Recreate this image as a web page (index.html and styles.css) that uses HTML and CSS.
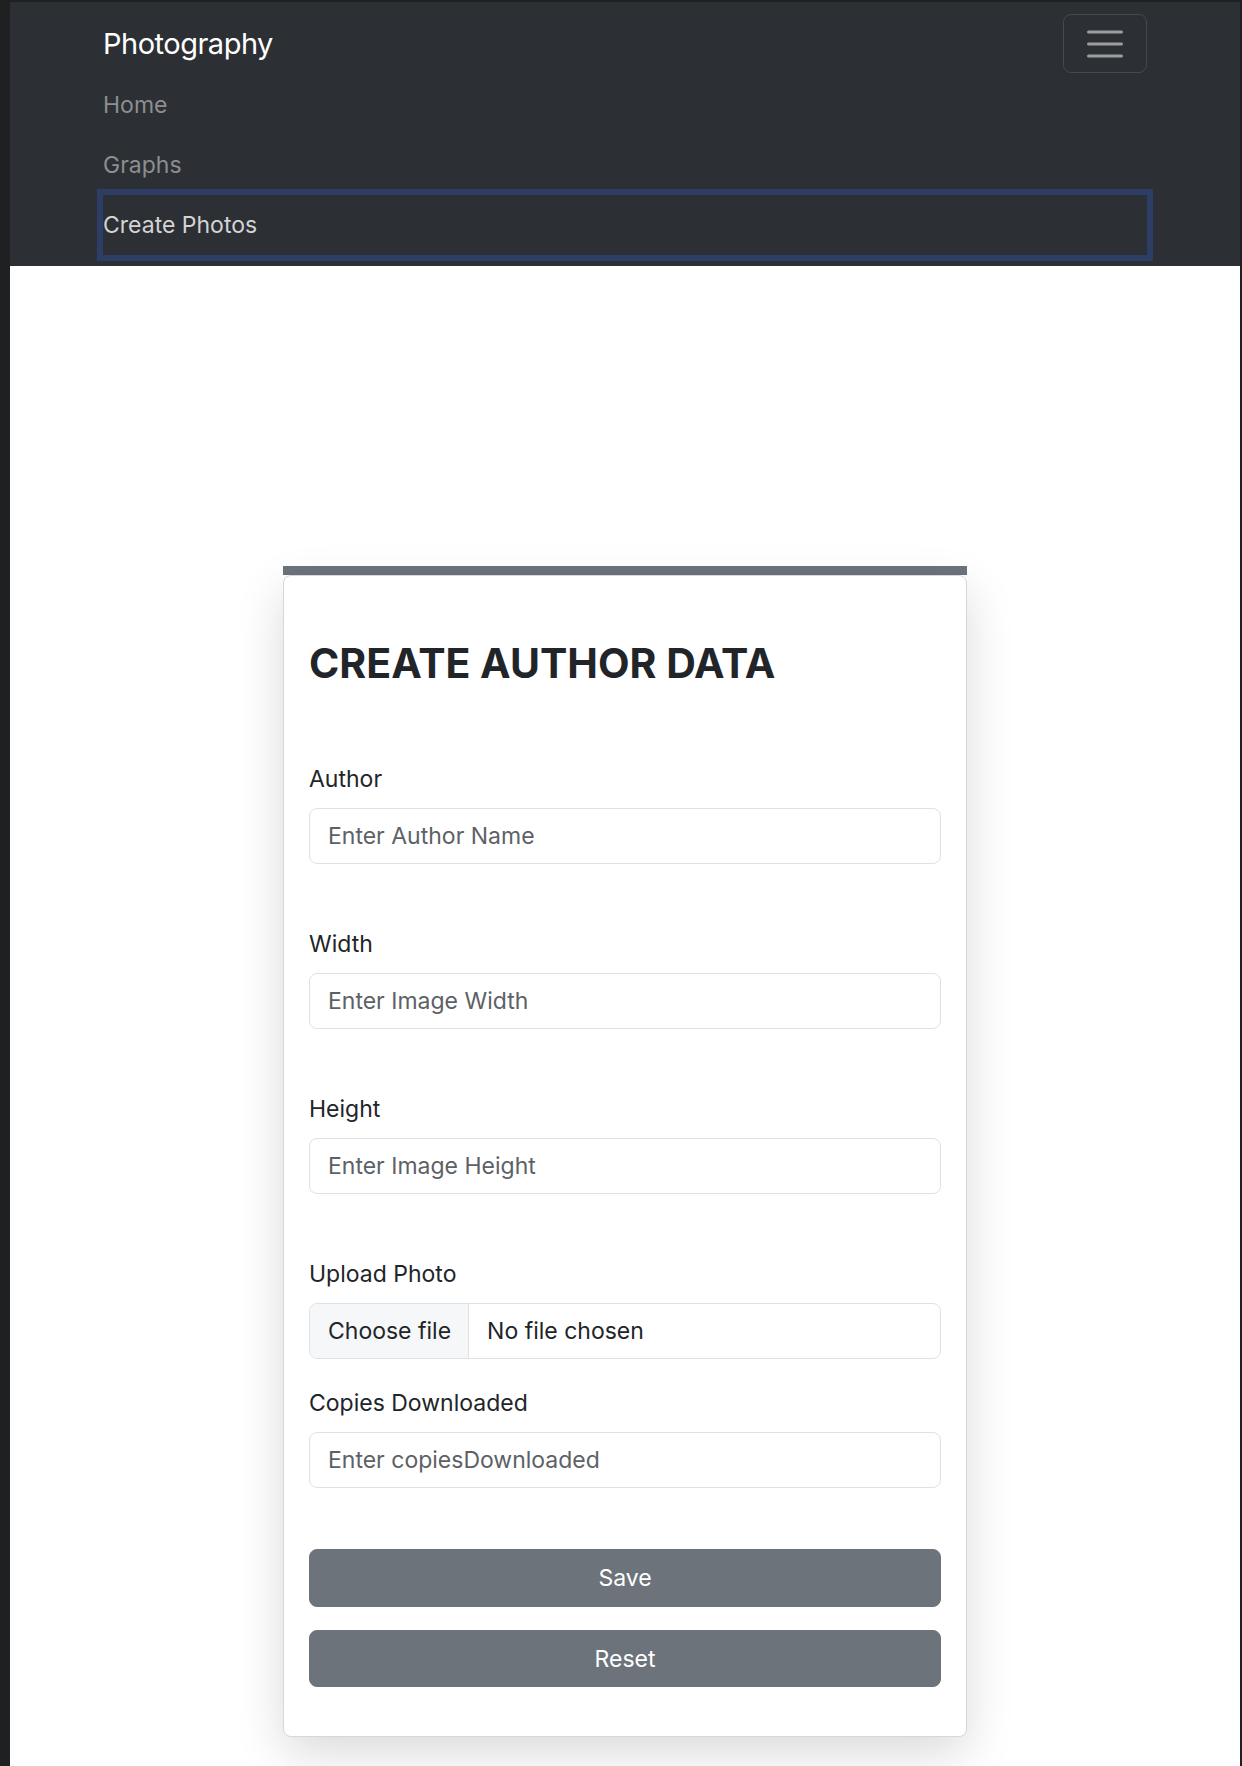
FILE: index.html
```html
<!DOCTYPE html>
<html lang="en">
<head>
<meta charset="utf-8">
<title>Photography</title>
<link rel="stylesheet" href="styles.css">
</head>
<body>
<div class="page">
  <nav class="navbar">
    <div class="nav-inner">
      <div class="nav-top">
        <a class="brand" href="#">Photography</a>
        <button class="toggler" type="button" aria-label="Toggle navigation">
          <svg width="36" height="30" viewBox="0 0 36 30" aria-hidden="true">
            <path d="M1.5 3H34.5M1.5 15H34.5M1.5 27H34.5" stroke="#9c9d9f" stroke-width="3" stroke-linecap="round"/>
          </svg>
        </button>
      </div>
      <ul class="nav-links">
        <li><a class="nav-link" href="#">Home</a></li>
        <li><a class="nav-link" href="#">Graphs</a></li>
        <li><a class="nav-link focused" href="#">Create Photos</a></li>
      </ul>
    </div>
  </nav>
  <main class="main">
    <div class="card-wrap">
      <div class="card-bar"></div>
      <div class="card">
        <h1 class="title">CREATE AUTHOR DATA</h1>
        <form class="form">
          <div class="group">
            <label class="label">Author</label>
            <input class="control" type="text" placeholder="Enter Author Name">
          </div>
          <div class="group">
            <label class="label">Width</label>
            <input class="control" type="text" placeholder="Enter Image Width">
          </div>
          <div class="group">
            <label class="label">Height</label>
            <input class="control" type="text" placeholder="Enter Image Height">
          </div>
          <div class="group group-tight">
            <label class="label">Upload Photo</label>
            <div class="file">
              <span class="file-btn">Choose file</span>
              <span class="file-name">No file chosen</span>
            </div>
          </div>
          <div class="group group-last">
            <label class="label">Copies Downloaded</label>
            <input class="control" type="text" placeholder="Enter copiesDownloaded">
          </div>
          <button class="btn" type="button">Save</button>
          <button class="btn btn-reset" type="button">Reset</button>
        </form>
      </div>
    </div>
  </main>
</div>
</body>
</html>
```
FILE: styles.css
```css
* { box-sizing: border-box; }
html, body { margin: 0; padding: 0; }
body {
  background: #1f2021;
  font-family: Inter, "Noto Sans", sans-serif;
  color: #212529;
}
.page {
  margin: 2px 2px 0 10px;
  background: #ffffff;
  min-height: 1764px;
}
.navbar {
  background: #2c2f34;
  padding: 12px 0 11px;
}
.nav-inner {
  width: 1044px;
  margin: 0 auto;
}
.nav-top {
  display: flex;
  justify-content: space-between;
  align-items: center;
  height: 59px;
}
.brand {
  color: #ffffff;
  text-decoration: none;
  font-size: 29px;
  letter-spacing: -0.5px;
  line-height: 1;
}
.toggler {
  width: 84px;
  height: 59px;
  border: 1px solid #45484d;
  border-radius: 8px;
  background: transparent;
  display: flex;
  align-items: center;
  justify-content: center;
  padding: 0;
}
.toggler svg { display: block; }
.nav-links {
  list-style: none;
  margin: 2px 0 0;
  padding: 0;
}
.nav-link {
  display: flex;
  align-items: center;
  height: 60px;
  color: #8c8e91;
  text-decoration: none;
  font-size: 23px;
}
.nav-link.focused {
  color: #d3d4d5;
  box-shadow: 0 0 0 6px #2c3e66;
}
.main {
  padding-top: 300px;
}
.card-wrap {
  width: 684px;
  margin: 0 auto;
}
.card-bar {
  height: 9px;
  background: #6c737b;
}
.card {
  border: 1px solid #d6d7d8;
  border-radius: 8px;
  background: #ffffff;
  padding: 63px 25px 49px;
  box-shadow: 0 16px 48px rgba(0, 0, 0, 0.15);
}
.title {
  margin: 0 0 74px;
  font-size: 41px;
  line-height: 49px;
  font-weight: 700;
  color: #212529;
}
.form {
  display: flex;
  flex-direction: column;
}
.group {
  display: flex;
  flex-direction: column;
  margin-bottom: 63px;
}
.group-tight { margin-bottom: 27px; }
.group-last { margin-bottom: 61px; }
.label {
  font-size: 23px;
  line-height: 34px;
  margin-bottom: 12px;
  color: #212529;
}
.control {
  height: 56px;
  border: 1px solid #dee2e6;
  border-radius: 8px;
  padding: 0 18px;
  font-family: inherit;
  font-size: 23px;
  color: #212529;
  background: #fff;
  outline: none;
}
.control::placeholder { color: #5d6166; }
.file {
  display: flex;
  height: 56px;
  border: 1px solid #dee2e6;
  border-radius: 8px;
  overflow: hidden;
  font-size: 23px;
}
.file-btn {
  display: flex;
  align-items: center;
  padding: 0 17px 0 18px;
  background: #f6f7f9;
  border-right: 1px solid #dee2e6;
  color: #212529;
}
.file-name {
  display: flex;
  align-items: center;
  padding-left: 18px;
  color: #212529;
}
.btn {
  height: 58px;
  border: 1px solid #6c737b;
  border-radius: 8px;
  background: #6c737b;
  color: #ffffff;
  font-family: inherit;
  font-size: 23px;
  cursor: pointer;
}
.btn-reset {
  margin-top: 23px;
  height: 57px;
}
```
